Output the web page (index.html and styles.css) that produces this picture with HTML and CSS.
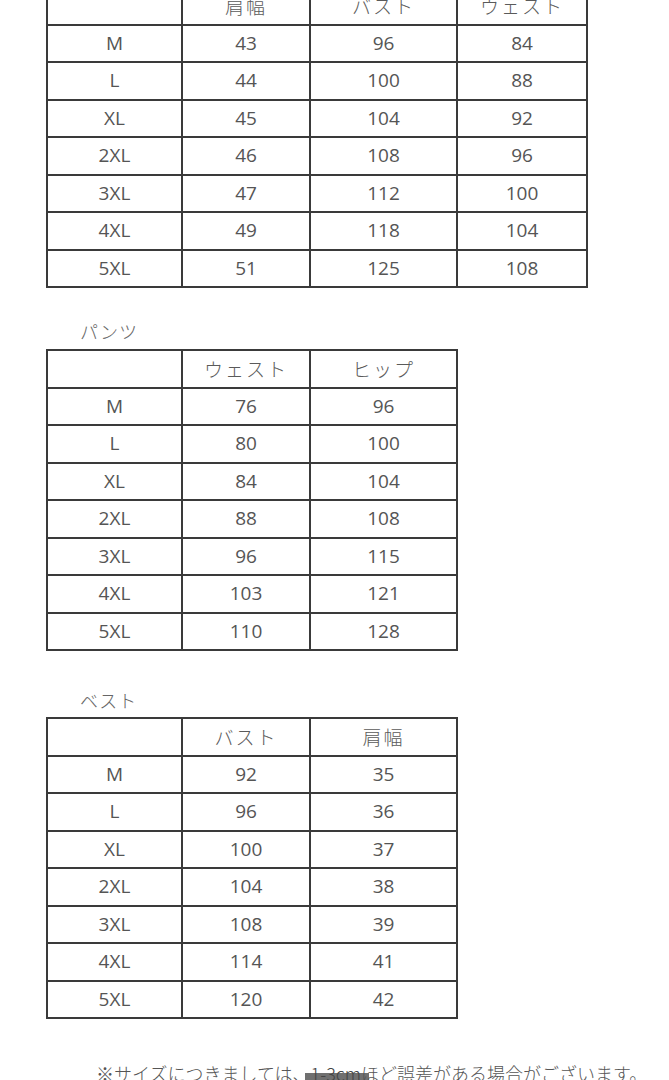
FILE: index.html
```html
<!DOCTYPE html>
<html lang="ja">
<head>
<meta charset="utf-8">
<title>サイズ表</title>
<link rel="stylesheet" href="styles.css">
</head>
<body>
<div class="page">
  <section class="block first">
    <table class="size t4">
      <colgroup><col class="c1"><col class="c2"><col class="c3"><col class="c4"></colgroup>
      <tr class="head"><td></td><td>肩幅</td><td>バスト</td><td>ウェスト</td></tr>
      <tr><td>M</td><td>43</td><td>96</td><td>84</td></tr>
      <tr><td>L</td><td>44</td><td>100</td><td>88</td></tr>
      <tr><td>XL</td><td>45</td><td>104</td><td>92</td></tr>
      <tr><td>2XL</td><td>46</td><td>108</td><td>96</td></tr>
      <tr><td>3XL</td><td>47</td><td>112</td><td>100</td></tr>
      <tr><td>4XL</td><td>49</td><td>118</td><td>104</td></tr>
      <tr><td>5XL</td><td>51</td><td>125</td><td>108</td></tr>
    </table>
  </section>

  <section class="block pants">
    <div class="label">パンツ</div>
    <table class="size t3">
      <colgroup><col class="c1"><col class="c2"><col class="c3"></colgroup>
      <tr class="head"><td></td><td>ウェスト</td><td>ヒップ</td></tr>
      <tr><td>M</td><td>76</td><td>96</td></tr>
      <tr><td>L</td><td>80</td><td>100</td></tr>
      <tr><td>XL</td><td>84</td><td>104</td></tr>
      <tr><td>2XL</td><td>88</td><td>108</td></tr>
      <tr><td>3XL</td><td>96</td><td>115</td></tr>
      <tr><td>4XL</td><td>103</td><td>121</td></tr>
      <tr><td>5XL</td><td>110</td><td>128</td></tr>
    </table>
  </section>

  <section class="block vest">
    <div class="label">ベスト</div>
    <table class="size t3">
      <colgroup><col class="c1"><col class="c2"><col class="c3"></colgroup>
      <tr class="head"><td></td><td>バスト</td><td>肩幅</td></tr>
      <tr><td>M</td><td>92</td><td>35</td></tr>
      <tr><td>L</td><td>96</td><td>36</td></tr>
      <tr><td>XL</td><td>100</td><td>37</td></tr>
      <tr><td>2XL</td><td>104</td><td>38</td></tr>
      <tr><td>3XL</td><td>108</td><td>39</td></tr>
      <tr><td>4XL</td><td>114</td><td>41</td></tr>
      <tr><td>5XL</td><td>120</td><td>42</td></tr>
    </table>
  </section>

  <p class="note">※サイズにつきましては、<span class="mark">1-3cm</span>ほど誤差がある場合がございます。</p>
</div>
</body>
</html>
```

FILE: styles.css
```css
html, body {
  margin: 0;
  padding: 0;
  background: #ffffff;
}

.page {
  width: 669px;
  height: 1080px;
  overflow: hidden;
  font-family: "Open Sans", "Noto Sans CJK JP", sans-serif;
  color: #555555;
}

.block {
  padding-left: 46px;
}

.first {
  margin-top: -14px;
}

.size {
  border-collapse: collapse;
  table-layout: fixed;
}

.size td {
  border: 2px solid #3a3a3a;
  height: 37.5px;
  padding: 0;
  box-sizing: border-box;
  text-align: center;
  vertical-align: middle;
  font-size: 19px;
  line-height: 1;
  color: #555555;
  font-family: "Open Sans", "Noto Sans CJK JP", sans-serif;
}

.size .head td {
  font-family: "Noto Sans CJK JP", sans-serif;
  font-weight: 300;
  color: #5a5a5a;
  letter-spacing: 2px;
}

.t4 { width: 542px; }
.t3 { width: 412px; }

.c1 { width: 135px; }
.c2 { width: 128px; }
.c3 { width: 147px; }
.c4 { width: 130px; }

.label {
  font-family: "Noto Sans CJK JP", sans-serif;
  font-size: 18px;
  font-weight: 300;
  color: #666666;
  padding-left: 34px;
  height: 26px;
  line-height: 26px;
  letter-spacing: 1px;
}

.pants {
  margin-top: 30px;
}
.pants .label {
  margin-bottom: 5px;
}

.vest {
  margin-top: 36px;
}
.vest .label {
  margin-bottom: 4px;
}

.note {
  margin: 42px 0 0 96px;
  font-family: "Noto Sans CJK JP", sans-serif;
  font-size: 18px;
  font-weight: 300;
  color: #555555;
  white-space: nowrap;
  line-height: 24px;
}

.mark {
  padding: 0 8px 6px 6px;
  margin: 0 -8px 0 -6px;
  border-radius: 7px 7px 0 0;
  background: linear-gradient(to bottom, transparent 0, transparent 13px, #707070 13px, #707070 100%);
  color: #444444;
}
```
